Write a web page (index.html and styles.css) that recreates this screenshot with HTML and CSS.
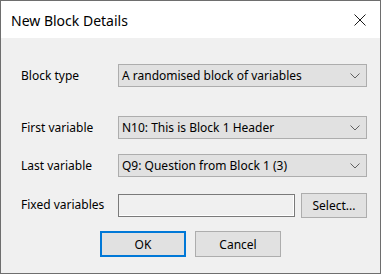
FILE: index.html
```html
<!DOCTYPE html>
<html lang="en">
<head>
  <meta charset="UTF-8">
  <meta name="viewport" content="width=device-width, initial-scale=1.0">
  <title>New Block Details</title>
  <link rel="stylesheet" href="styles.css">
</head>
<body>
  <div class="window">
    <div class="titlebar">
      <span class="title">New Block Details</span>
      <svg class="close" width="12" height="12" viewBox="0 0 12 12">
        <path d="M0.5 0.5 L11.5 11.5 M11.5 0.5 L0.5 11.5" stroke="#1a1a1a" stroke-width="1" fill="none"/>
      </svg>
    </div>
    <div class="content">
      <div class="row row-type">
        <label class="label">Block type</label>
        <div class="combo">
          <span>A randomised block of variables</span>
          <svg class="chevron" width="10" height="6" viewBox="0 0 10 6">
            <path d="M0.5 0.5 L5 5 L9.5 0.5" stroke="#606060" stroke-width="1" fill="none"/>
          </svg>
        </div>
      </div>
      <div class="row row-first">
        <label class="label">First variable</label>
        <div class="combo">
          <span>N10: This is Block 1 Header</span>
          <svg class="chevron" width="10" height="6" viewBox="0 0 10 6">
            <path d="M0.5 0.5 L5 5 L9.5 0.5" stroke="#606060" stroke-width="1" fill="none"/>
          </svg>
        </div>
      </div>
      <div class="row row-last">
        <label class="label">Last variable</label>
        <div class="combo">
          <span>Q9: Question from Block 1 (3)</span>
          <svg class="chevron" width="10" height="6" viewBox="0 0 10 6">
            <path d="M0.5 0.5 L5 5 L9.5 0.5" stroke="#606060" stroke-width="1" fill="none"/>
          </svg>
        </div>
      </div>
      <div class="row row-fixed">
        <label class="label label-fixed">Fixed variables</label>
        <div class="field"></div>
        <button class="btn btn-select">Select...</button>
      </div>
      <div class="actions">
        <button class="btn btn-ok">OK</button>
        <button class="btn">Cancel</button>
      </div>
    </div>
  </div>
</body>
</html>
```

FILE: styles.css
```css
body {
  margin: 0;
  background: #ffffff;
  font-family: "Noto Sans", "Open Sans", sans-serif;
  font-size: 12px;
  color: #000;
}
.window {
  width: 379px;
  height: 272px;
  border: 1px solid #6e6e6e;
  background: #f0f0f0;
}
.titlebar {
  height: 37px;
  background: #fff;
  display: flex;
  align-items: center;
  justify-content: space-between;
  padding: 0 14px 0 10px;
}
.title {
  font-size: 14px;
  margin-top: 1px;
}
.close {
  display: block;
}
.content {
  padding: 26px 13px 0 20px;
}
.row {
  display: flex;
  align-items: center;
}
.row-first {
  margin-top: 29px;
}
.row-last {
  margin-top: 15px;
}
.row-fixed {
  margin-top: 16px;
}
.label {
  width: 97px;
  flex: none;
}
.label-fixed {
  margin-bottom: 3px;
}
.combo {
  flex: 1;
  height: 21px;
  border: 1px solid #adadad;
  background: #e1e1e1;
  display: flex;
  align-items: center;
  justify-content: space-between;
  padding: 0 6px 0 3px;
}
.chevron {
  display: block;
}
.field {
  width: 175px;
  height: 21px;
  border: 1px solid #7a7a7a;
  background: #f0f0f0;
  box-shadow: inset -1px -1px 0 #fff;
}
.btn {
  font-family: inherit;
  font-size: 12px;
  color: #000;
  background: #e1e1e1;
  border: 1px solid #adadad;
  padding: 0;
  width: 86px;
  height: 26px;
}
.btn-select {
  width: 66px;
  height: 25px;
  margin-left: 6px;
}
.btn-ok {
  border: 2px solid #0078d7;
}
.actions {
  display: flex;
  justify-content: center;
  gap: 9px;
  margin-top: 13px;
  margin-left: -20px;
  margin-right: -13px;
}
```
